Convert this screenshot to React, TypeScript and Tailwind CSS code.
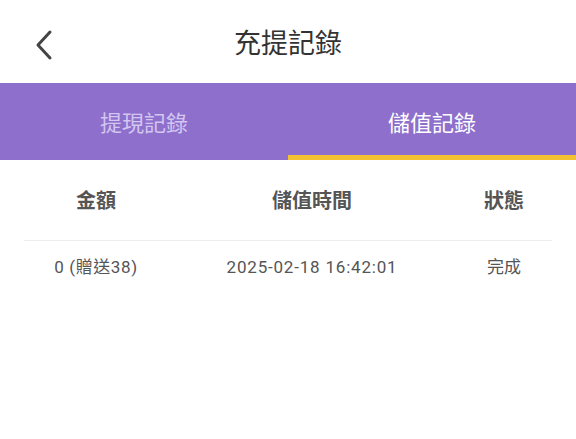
const font = { fontFamily: '"Noto Sans CJK TC", "Noto Sans", sans-serif' };
const rowFont = { fontFamily: 'Roboto, "Noto Sans CJK TC", sans-serif' };

export default function App() {
  return (
    <div className="w-[576px] h-[439px] bg-white" style={font}>
      <div className="relative flex h-[83px] items-center justify-center">
        <button className="absolute left-[33px] top-[29px] text-[#444]">
          <svg width="22" height="32" viewBox="0 0 22 32" fill="none">
            <path d="M17 3 L5 16 L17 29" stroke="currentColor" strokeWidth="3" strokeLinecap="round" strokeLinejoin="round" />
          </svg>
        </button>
        <h1 className="text-[27px] leading-none text-[#333]">充提記錄</h1>
      </div>

      <div className="grid h-[77px] grid-cols-2 bg-[#8e6fcc]">
        <div className="flex items-center justify-center text-[22px] text-[#d3c6f0]">提現記錄</div>
        <div className="relative flex items-center justify-center text-[22px] text-white">
          儲值記錄
          <span className="absolute bottom-0 left-0 right-0 h-[5px] bg-[#f2c233]" />
        </div>
      </div>

      <div className="px-6">
        <div className="grid h-[81px] grid-cols-[144px_288px_96px] items-center border-b border-[#eeeeee] text-[20px] font-bold text-[#555]">
          <div className="text-center">金額</div>
          <div className="text-center">儲值時間</div>
          <div className="text-center">狀態</div>
        </div>
        <div className="grid h-[54px] grid-cols-[144px_288px_96px] items-center text-[17px] text-[#555]" style={rowFont}>
          <div className="text-center tracking-[0.6px]">0 (贈送38)</div>
          <div className="text-center tracking-[0.8px]">2025-02-18 16:42:01</div>
          <div className="text-center">完成</div>
        </div>
      </div>
    </div>
  );
}
